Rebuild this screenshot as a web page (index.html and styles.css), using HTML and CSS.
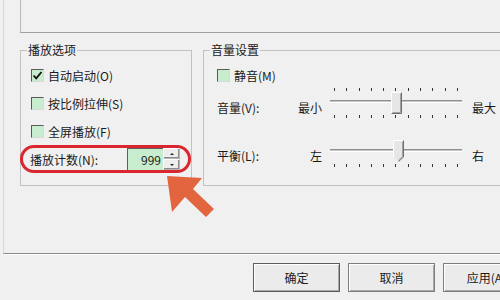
FILE: index.html
```html
<!DOCTYPE html>
<html lang="zh-CN">
<head>
    <meta charset="UTF-8">
    <title>播放设置</title>
    <link rel="stylesheet" href="styles.css">
</head>
<body>

<div class="tab">
    <div class="top-box"></div>

    <div class="groups">
        <fieldset class="group group-play">
            <legend>播放选项</legend>
            <label class="check-row">
                <span class="box"><svg width="11" height="11" viewBox="0 0 11 11"><path d="M1.5 5.5 L4.2 8.3 L9.5 2" fill="none" stroke="#111" stroke-width="1.8"/></svg></span>
                自动启动(O)
            </label>
            <label class="check-row"><span class="box"></span>按比例拉伸(S)</label>
            <label class="check-row"><span class="box"></span>全屏播放(F)</label>
            <div class="count-row">
                <span>播放计数(N):</span>
                <div class="spin">
                    <span class="spin-value">999</span>
                    <div class="spin-btns">
                        <span class="spin-btn"><i class="tri up"></i></span>
                        <span class="spin-btn"><i class="tri down"></i></span>
                    </div>
                </div>
            </div>
        </fieldset>

        <fieldset class="group group-volume">
            <legend>音量设置</legend>
            <label class="check-row"><span class="box"></span>静音(M)</label>

            <div class="slider-row row-volume">
                <span class="slider-name">音量(V):</span>
                <span class="slider-min">最小</span>
                <div class="slider slider-both">
                    <div class="ticks ticks-top">
                        <i></i><i></i><i></i><i></i><i></i><i></i><i></i><i></i><i></i><i></i><i></i>
                    </div>
                    <div class="groove"></div>
                    <svg class="thumb" width="11" height="22" viewBox="0 0 11 22">
                        <rect x="0" y="0" width="11" height="22" fill="#e6e6e6"/>
                        <path d="M0.5 21.5 V0.5 H10.5" fill="none" stroke="#fff"/>
                        <path d="M0.5 21.5 H10.5 V0.5" fill="none" stroke="#6e6e6e"/>
                        <path d="M1.5 20.5 H9.5 V1.5" fill="none" stroke="#a0a0a0"/>
                    </svg>
                    <div class="ticks ticks-bottom">
                        <i></i><i></i><i></i><i></i><i></i><i></i><i></i><i></i><i></i><i></i><i></i>
                    </div>
                </div>
                <span class="slider-max">最大</span>
            </div>

            <div class="slider-row row-balance">
                <span class="slider-name">平衡(L):</span>
                <span class="slider-min">左</span>
                <div class="slider slider-down">
                    <div class="groove"></div>
                    <svg class="thumb" width="11" height="22" viewBox="0 0 11 22">
                        <path d="M0 0 H11 V17 L5.5 22 L0 17 Z" fill="#e6e6e6"/>
                        <path d="M0.5 17 V0.5 H10.5" fill="none" stroke="#fff"/>
                        <path d="M10.5 0.5 V17 L5.5 21.5" fill="none" stroke="#6e6e6e"/>
                        <path d="M9.5 1.5 V16.5 L5.5 20" fill="none" stroke="#a0a0a0"/>
                    </svg>
                    <div class="ticks ticks-bottom">
                        <i></i><i></i><i></i><i></i><i></i><i></i><i></i><i></i><i></i><i></i><i></i>
                    </div>
                </div>
                <span class="slider-max">右</span>
            </div>
        </fieldset>
    </div>
</div>

<div class="buttons">
    <button class="btn btn-default">确定</button>
    <button class="btn">取消</button>
    <button class="btn">应用(A)</button>
</div>

<!-- annotation arrow pointing at the count box -->
<svg class="arrow" width="60" height="52" viewBox="0 0 60 52">
    <polygon points="7,6 42,8 33,19 54,39 46,47 25,27 12,42" fill="#e2653f"/>
</svg>

</body>
</html>
```

FILE: styles.css
```css
body {
    margin: 0;
    width: 500px;
    height: 300px;
    overflow: hidden;
    position: relative;
    background-color: #f0f0f0;
    color: #1a1a1a;
    font-family: "Microsoft YaHei", "Noto Sans CJK SC", "Noto Sans", sans-serif;
    font-size: 12px;
}

.tab {
    margin-left: 3px;
    height: 253px;
    border-left: 1px solid #d6d6d6;
    border-bottom: 1px solid #8a8a8a;
    box-shadow: 0 1px 0 #fff;
}

.top-box {
    margin-left: 16px;
    height: 32px;
    border-left: 1px solid #b9b9b9;
    border-bottom: 1px solid #a0a0a0;
}

.groups {
    display: flex;
    gap: 11px;
    margin-top: 9px;
    padding-left: 16px;
}

.group {
    margin: 0;
    padding: 3px 0 12px;
    border: 1px solid #c2c2c2;
    box-sizing: border-box;
    min-width: 0;
}

.group-play {
    width: 172px;
    flex: none;
}

.group-volume {
    width: 320px;
    flex: none;
}

legend {
    margin-left: 6px;
    padding: 0 1px;
    line-height: 16px;
}

.check-row {
    display: flex;
    align-items: center;
    gap: 4px;
    height: 28px;
    padding-left: 10px;
}

.group-volume .check-row {
    padding-left: 13px;
}

.box {
    width: 13px;
    height: 13px;
    box-sizing: border-box;
    display: flex;
    align-items: center;
    justify-content: center;
    background-color: #c8ecce;
    border: 1px solid;
    border-color: #5a5a5a #d8d8d8 #d8d8d8 #5a5a5a;
}

.count-row {
    display: flex;
    align-items: center;
    justify-content: space-between;
    width: 171px;
    height: 28px;
    margin-left: -1px;
    padding: 0 8px 0 7px;
    box-sizing: border-box;
    border: 3px solid #d9262f;
    border-radius: 14px;
}

.spin {
    display: flex;
    height: 22px;
}

.spin-value {
    width: 36px;
    box-sizing: border-box;
    padding-right: 2px;
    text-align: right;
    line-height: 21px;
    background-color: #c8ecce;
    border-top: 1px solid #5f5f5f;
    border-left: 1px solid #5f5f5f;
}

.spin-btns {
    display: flex;
    flex-direction: column;
    width: 17px;
}

.spin-btn {
    flex: 1;
    display: flex;
    align-items: center;
    justify-content: center;
    background-color: #ededed;
    border: 1px solid #b5b5b5;
    border-left-color: #fff;
    border-top-color: #fff;
    box-shadow: inset -1px -1px 0 #8c8c8c;
}

.tri {
    width: 0;
    height: 0;
    border-left: 2px solid transparent;
    border-right: 2px solid transparent;
}

.tri.up {
    border-bottom: 2px solid #222;
}

.tri.down {
    border-top: 2px solid #222;
}

.slider-row {
    display: flex;
    align-items: center;
    padding-left: 13px;
}

.row-volume {
    height: 36px;
}

.row-balance {
    height: 34px;
    margin-top: 13px;
}

.slider-name {
    width: 81px;
}

.slider-min {
    width: 24px;
    text-align: right;
    margin-right: 8px;
}

.slider-max {
    margin-left: 10px;
}

.slider {
    position: relative;
    width: 132px;
    flex: none;
}

.slider-both {
    height: 42px;
}

.slider-down {
    height: 34px;
}

.groove {
    position: absolute;
    left: 0;
    right: 0;
    height: 1px;
    border-top: 1px solid #8e8e8e;
    background-color: #c6c6c6;
    border-bottom: 1px solid #fff;
}

.slider-both .groove {
    top: 14px;
}

.slider-down .groove {
    top: 11px;
}

.thumb {
    position: absolute;
}

.slider-both .thumb {
    top: 6px;
    left: 61px;
}

.slider-down .thumb {
    top: 2px;
    left: 63px;
}

.ticks {
    position: absolute;
    left: 0;
    right: 0;
    display: flex;
    justify-content: space-between;
    padding: 0 4px;
}

.ticks i {
    width: 1px;
    height: 3px;
    background-color: #333;
}

.slider-both .ticks-top {
    top: 2px;
}

.slider-both .ticks-bottom {
    top: 29px;
}

.slider-down .ticks-bottom {
    top: 26px;
}

.buttons {
    display: flex;
    gap: 8px;
    margin-top: 9px;
    padding-left: 253px;
}

.btn {
    flex: none;
    width: 87px;
    height: 29px;
    padding: 0;
    font-family: inherit;
    font-size: 12px;
    color: #1a1a1a;
    background-color: #ebebeb;
    border: 1px solid #7d7d7d;
    box-shadow: inset 1px 1px 0 #fff, inset -1px -1px 0 #a8a8a8;
}

.btn-default {
    border-color: #5c5c5c;
}

.arrow {
    position: absolute;
    left: 160px;
    top: 170px;
}
```
